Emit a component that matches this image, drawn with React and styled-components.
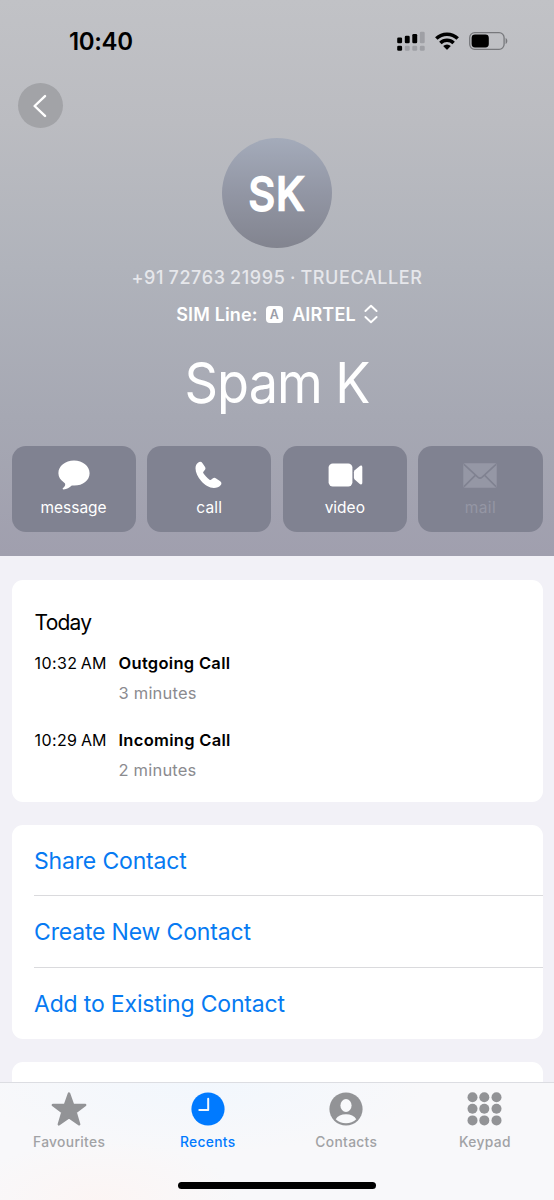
import React from "react";
import styled, { createGlobalStyle } from "styled-components";

const GlobalStyle = createGlobalStyle`
  *, *::before, *::after { box-sizing: border-box; }
  body {
    margin: 0;
    background: #f2f1f7;
    font-family: Inter, "Liberation Sans", sans-serif;
    color: #000;
  }
  svg { display: block; flex: none; }
  button { font: inherit; color: inherit; border: 0; padding: 0; background: none; }
`;

const Screen = styled.div`
  display: flex;
  flex-direction: column;
  width: 554px;
  height: 1200px;
  overflow: hidden;
`;

const Header = styled.header`
  display: flex;
  flex-direction: column;
  flex: none;
  height: 556px;
  background: linear-gradient(180deg, #c1c2c6 0%, #bbbcc1 22%, #b0b3bb 48%, #a6a8b3 75%, #a09fae 100%);
`;

const StatusBar = styled.div`
  display: flex;
  align-items: center;
  justify-content: space-between;
  height: 83px;
  padding: 0 46px 0 69px;
`;

const Clock = styled.time`
  font-size: 24px;
  font-weight: 600;
  letter-spacing: -0.35px;
  line-height: 30px;
`;

const StatusIcons = styled.div`
  display: flex;
  align-items: center;
  gap: 10px;
  margin-top: -1px;
`;

const BackButton = styled.button`
  display: grid;
  place-items: center;
  flex: none;
  width: 45px;
  height: 45px;
  margin-left: 18px;
  border-radius: 50%;
  background: #a2a3a7;
`;

const Identity = styled.section`
  display: flex;
  flex-direction: column;
  align-items: center;
  margin-top: 10px;
`;

const Avatar = styled.div`
  display: grid;
  place-items: center;
  width: 110px;
  height: 110px;
  padding-top: 1px;
  border-radius: 50%;
  background: linear-gradient(180deg, #a4abba 0%, #9296a4 50%, #82848f 100%);
  color: #fff;
  font-size: 45px;
  font-weight: 400;
  line-height: 56px;
  -webkit-text-stroke: 2.4px #fff;
  stroke-linejoin: round;
`;

const Initials = styled.span`
  letter-spacing: 1px;
  transform: scaleX(0.92);
`;

const PhoneLine = styled.p`
  margin: 18px 0 0;
  color: #e6e7eb;
  font-size: 18px;
  font-weight: 500;
  letter-spacing: 0.62px;
  word-spacing: -1px;
  line-height: 24px;
  white-space: nowrap;
`;

const SimLine = styled.div`
  display: flex;
  align-items: center;
  height: 24px;
  margin-top: 12px;
  color: #fff;
  font-size: 18px;
  font-weight: 600;
  letter-spacing: 0.14px;
`;

const SimBadge = styled.span`
  display: grid;
  place-items: center;
  width: 17.5px;
  height: 17px;
  margin: 0 9px 0 8px;
  border-radius: 4px;
  background: #fff;
  color: #9b9da8;
  font-size: 12.5px;
  line-height: 17px;
`;

const SimName = styled.span`
  margin-right: 8px;
`;

const Name = styled.h1`
  margin: 22px 0 0;
  color: #fff;
  font-size: 56.5px;
  font-weight: 400;
  letter-spacing: -1px;
  word-spacing: -0.5px;
  line-height: 70px;
  transform: scaleX(0.925);
`;

const Actions = styled.nav`
  display: grid;
  grid-template-columns: repeat(4, 1fr);
  gap: 11.5px;
  margin-top: 28px;
  padding: 0 11.5px;
`;

const Action = styled.button`
  display: flex;
  flex-direction: column;
  align-items: center;
  height: 86px;
  padding-top: 13px;
  border-radius: 14px;
  background: #808291;
  color: ${(p) => (p.disabled ? "#9496a4" : "#fff")};
  font-size: 15.5px;
  letter-spacing: ${(p) => p.$tracking}px;
  line-height: 20px;
`;

const ActionIcon = styled.span`
  display: grid;
  place-items: center;
  height: 32px;
  margin-bottom: 7px;
`;

const Content = styled.main`
  display: flex;
  flex-direction: column;
  flex: none;
  gap: 23px;
  height: 526px;
  padding: 24px 11.5px 0;
  overflow: hidden;
`;

const Card = styled.section`
  flex: none;
  border-radius: 11px;
  background: #fff;
`;

const HistoryCard = styled(Card)`
  height: 222px;
  padding: 29px 23px 0;
`;

const Day = styled.h2`
  margin: 0 0 14px;
  font-size: 21px;
  font-weight: 400;
  letter-spacing: -0.75px;
  line-height: 28px;
`;

const CallRow = styled.div`
  display: grid;
  grid-template-columns: 84px 1fr;
  row-gap: 5px;
  height: 77px;
  align-content: start;
`;

const CallTime = styled.time`
  display: flex;
  gap: 3.5px;
  font-size: 16px;
  line-height: 25px;
  letter-spacing: 0.4px;
`;

const Meridiem = styled.span`
  letter-spacing: 0;
`;

const CallKind = styled.strong`
  font-size: 16.5px;
  font-weight: 600;
  letter-spacing: 0.3px;
  line-height: 25px;
`;

const Duration = styled.span`
  grid-column: 2;
  color: #8b8b8f;
  font-size: 16.5px;
  letter-spacing: 0.2px;
  line-height: 25px;
`;

const LinkCard = styled(Card)`
  padding-left: 22.5px;
`;

const LinkRow = styled.button`
  display: flex;
  align-items: center;
  width: 100%;
  height: ${(p) => (p.$last ? 71 : 71.25)}px;
  padding-top: 2px;
  border-bottom: ${(p) => (p.$last ? "0" : "1px solid #dadadd")};
  color: #067af2;
  font-size: 23px;
  letter-spacing: -0.17px;
`;

const NextCard = styled(Card)`
  height: 60px;
`;

const TabBar = styled.footer`
  display: flex;
  flex-direction: column;
  flex: none;
  align-items: center;
  height: 118px;
  border-top: 1px solid #dcdde2;
  background:
    radial-gradient(ellipse 140px 60px at 100px 118px, #fcf5f4 0%, transparent 100%),
    radial-gradient(ellipse 230px 70px at 200px 0, #f2f7fd 0%, transparent 100%),
    #f8f8fa;
`;

const Tabs = styled.nav`
  display: grid;
  grid-template-columns: repeat(4, 138.6px);
  height: 98px;
`;

const Tab = styled.button`
  display: flex;
  flex-direction: column;
  align-items: center;
  height: 70px;
  padding-top: 6px;
  color: ${(p) => (p.$active ? "#007aff" : "#a1a2a5")};
  font-size: 13.8px;
  font-weight: 500;
  letter-spacing: 0.34px;
  line-height: 18px;
`;

const TabIcon = styled.span`
  display: grid;
  place-items: center;
  height: 40px;
  margin-bottom: 4px;
  color: ${(p) => (p.$active ? "#007aff" : "#929396")};
`;

const HomeIndicator = styled.div`
  width: 198px;
  height: 7px;
  margin-top: 1px;
  border-radius: 4px;
  background: #000;
`;

const SignalIcon = () => (
  <svg width="28" height="20" viewBox="0 0 28 20">
    <g fill="#000">
      <rect x="0.2" y="6.5" width="4.9" height="5.7" rx="1.3" />
      <rect x="7.8" y="4.8" width="4.9" height="7.4" rx="1.3" />
      <rect x="15.3" y="2.9" width="4.9" height="9.3" rx="1.3" />
      <rect x="0.2" y="14.8" width="4.9" height="5" rx="1.3" />
    </g>
    <g fill="#9fa0a5">
      <rect x="22.8" y="0.7" width="4.9" height="11.5" rx="1.3" />
      <rect x="7.8" y="14.8" width="4.9" height="5" rx="1.3" />
      <rect x="15.3" y="14.8" width="4.9" height="5" rx="1.3" />
      <rect x="22.8" y="14.8" width="4.9" height="5" rx="1.3" />
    </g>
  </svg>
);

const WifiIcon = () => (
  <svg width="24" height="18" viewBox="0 0 24 18">
    <g fill="none" stroke="#000" strokeWidth="3.5">
      <path d="M1.3 6.5A15.3 15.3 0 0 1 22.7 6.5" />
      <path d="M5.4 10.9A9.4 9.4 0 0 1 18.6 10.9" />
    </g>
    <path d="M8.2 14A5.5 5.5 0 0 1 15.8 14L12.7 17.3Q12 18 11.3 17.3Z" fill="#000" />
  </svg>
);

const BatteryIcon = () => (
  <svg width="39" height="18" viewBox="0 0 39 18">
    <rect x="0.7" y="0.7" width="34.4" height="16.6" rx="5" fill="none" stroke="#77787c" strokeWidth="1.3" />
    <rect x="2.6" y="2.6" width="17.2" height="12.8" rx="3.4" fill="#000" />
    <path d="M36.6 6C38.9 7 38.9 11 36.6 12Z" fill="#77787c" />
  </svg>
);

const ChevronLeft = () => (
  <svg width="15" height="24" viewBox="0 0 15 24">
    <path d="M12 2.1L1.6 12L12 21.9" fill="none" stroke="#fff" strokeWidth="2.4" strokeLinecap="round" strokeLinejoin="round" />
  </svg>
);

const SortChevrons = () => (
  <svg width="14" height="20" viewBox="0 0 14 20">
    <path d="M1.4 7L7 1.7L12.6 7M1.4 13L7 18.3L12.6 13" fill="none" stroke="#fff" strokeWidth="1.9" strokeLinecap="round" strokeLinejoin="round" />
  </svg>
);

const MessageIcon = () => (
  <svg width="32" height="30" viewBox="0 0 32 30">
    <path d="M16 0.6C24.8 0.6 31.6 6.2 31.6 13.3C31.6 20.5 24.8 25.6 16.4 25.6C15.5 25.6 14.6 25.6 13.8 25.5C11.3 27.7 8.8 29.3 5.6 29.5C4.6 29.5 4.4 28.6 5 28C6.4 26.7 7.2 25.7 7.2 24.4C7.2 23.6 6.7 23 6 22.5C2.6 20.2 0.4 17 0.4 13.3C0.4 6.2 7.2 0.6 16 0.6Z" fill="currentColor" />
  </svg>
);

const PhoneIcon = () => (
  <svg width="28" height="28" viewBox="0 0 28 28">
    <path d="M18.8 27C14.5 27 9.6 23.8 6.2 20C2.8 16.2 0.5 11.6 0.5 7.2C0.5 4.6 1.4 2.9 3 1.7C4.8 0.4 6.3 0.6 7.5 2.2L9.9 5.7C10.8 7 10.6 8.2 9.6 9.3L8.6 10.5C8.1 11.1 8 11.6 8.4 12.3C9.5 14.2 12.2 17.1 14.5 18.7C15.2 19.2 15.9 19.2 16.4 18.6L17.6 17.6C18.7 16.7 19.8 16.6 21.1 17.4L24.9 19.9C26.7 21.1 26.9 22.6 25.6 24.3C24 26.2 22 27 18.8 27Z" fill="currentColor" />
  </svg>
);

const VideoIcon = () => (
  <svg width="36" height="24" viewBox="0 0 36 24">
    <rect x="1.6" y="0.4" width="23.8" height="23" rx="4.2" fill="currentColor" />
    <path d="M26.9 9.3V14.6Q26.9 15.8 27.7 16.6L32.2 20.6C33.9 22 35.3 21.6 35.3 19.8V4.2C35.3 2.4 33.9 2 32.2 3.4L27.7 7.3Q26.9 8.1 26.9 9.3Z" fill="currentColor" />
  </svg>
);

const MailIcon = () => (
  <svg width="34" height="25" viewBox="0 0 34 25">
    <rect x="0.3" y="0.3" width="33.4" height="24.4" rx="1.6" fill="#9597a5" />
    <g fill="none" stroke="#808291" strokeWidth="1.6">
      <path d="M1 1.4L14.8 14.2Q17 16.1 19.2 14.2L33 1.4" />
      <path d="M1 23.6L12.5 12.1M33 23.6L21.5 12.1" />
    </g>
  </svg>
);

const StarIcon = () => (
  <svg width="36" height="35" viewBox="0 0 36 35">
    <path d="M18 1.7L22 13H34.1L24.5 20.2L28.1 32.3L18 25.2L7.9 32.3L11.5 20.2L1.9 13H14Z" fill="currentColor" stroke="currentColor" strokeWidth="2.6" strokeLinejoin="round" />
  </svg>
);

const ClockIcon = () => (
  <svg width="34" height="34" viewBox="0 0 34 34">
    <circle cx="17" cy="17" r="16.6" fill="currentColor" />
    <path d="M17.2 6.7V18H8.3" fill="none" stroke="#f4f8fd" strokeWidth="2" strokeLinecap="round" strokeLinejoin="round" />
  </svg>
);

const PersonIcon = () => (
  <svg width="34" height="34" viewBox="0 0 34 34">
    <circle cx="17" cy="17" r="16.6" fill="currentColor" />
    <ellipse cx="17" cy="13.5" rx="5.6" ry="6.4" fill="#f8f9fb" />
    <path d="M6.7 27.3C8.6 23.8 12.4 22.2 17 22.2C21.6 22.2 25.4 23.8 27.3 27.3C24.5 29.9 21 31.2 17 31.2C13 31.2 9.5 29.9 6.7 27.3Z" fill="#f8f9fb" />
  </svg>
);

const KeypadIcon = () => (
  <svg width="35" height="34" viewBox="0 0 35 34">
    {[5.5, 17.3, 29.5].map((cx) =>
      [5.2, 16.8, 28.4].map((cy) => <circle key={`${cx}-${cy}`} cx={cx} cy={cy} r="5" fill="currentColor" />)
    )}
  </svg>
);

const actions = [
  { label: "message", Icon: MessageIcon, tracking: -0.03 },
  { label: "call", Icon: PhoneIcon, tracking: 0.18 },
  { label: "video", Icon: VideoIcon, tracking: 0 },
  { label: "mail", Icon: MailIcon, tracking: 0.35, disabled: true },
];

const calls = [
  { time: "10:32", kind: "Outgoing Call", duration: "3 minutes" },
  { time: "10:29", kind: "Incoming Call", duration: "2 minutes" },
];

const links = ["Share Contact", "Create New Contact", "Add to Existing Contact"];

const tabs = [
  { label: "Favourites", Icon: StarIcon },
  { label: "Recents", Icon: ClockIcon, active: true },
  { label: "Contacts", Icon: PersonIcon },
  { label: "Keypad", Icon: KeypadIcon },
];

export default function App() {
  return (
    <Screen>
      <GlobalStyle />
      <Header>
        <StatusBar>
          <Clock>10:40</Clock>
          <StatusIcons>
            <SignalIcon />
            <WifiIcon />
            <BatteryIcon />
          </StatusIcons>
        </StatusBar>
        <BackButton aria-label="Back">
          <ChevronLeft />
        </BackButton>
        <Identity>
          <Avatar>
            <Initials>SK</Initials>
          </Avatar>
          <PhoneLine>+91 72763 21995 · TRUECALLER</PhoneLine>
          <SimLine>
            SIM Line:
            <SimBadge>A</SimBadge>
            <SimName>AIRTEL</SimName>
            <SortChevrons />
          </SimLine>
          <Name>Spam K</Name>
        </Identity>
        <Actions>
          {actions.map(({ label, Icon, tracking, disabled }) => (
            <Action key={label} disabled={disabled} $tracking={tracking}>
              <ActionIcon>
                <Icon />
              </ActionIcon>
              {label}
            </Action>
          ))}
        </Actions>
      </Header>
      <Content>
        <HistoryCard>
          <Day>Today</Day>
          {calls.map(({ time, kind, duration }) => (
            <CallRow key={time}>
              <CallTime>
                {time}
                <Meridiem>AM</Meridiem>
              </CallTime>
              <CallKind>{kind}</CallKind>
              <Duration>{duration}</Duration>
            </CallRow>
          ))}
        </HistoryCard>
        <LinkCard>
          {links.map((label, i) => (
            <LinkRow key={label} $last={i === links.length - 1}>
              {label}
            </LinkRow>
          ))}
        </LinkCard>
        <NextCard />
      </Content>
      <TabBar>
        <Tabs>
          {tabs.map(({ label, Icon, active }) => (
            <Tab key={label} $active={active}>
              <TabIcon $active={active}>
                <Icon />
              </TabIcon>
              {label}
            </Tab>
          ))}
        </Tabs>
        <HomeIndicator />
      </TabBar>
    </Screen>
  );
}
